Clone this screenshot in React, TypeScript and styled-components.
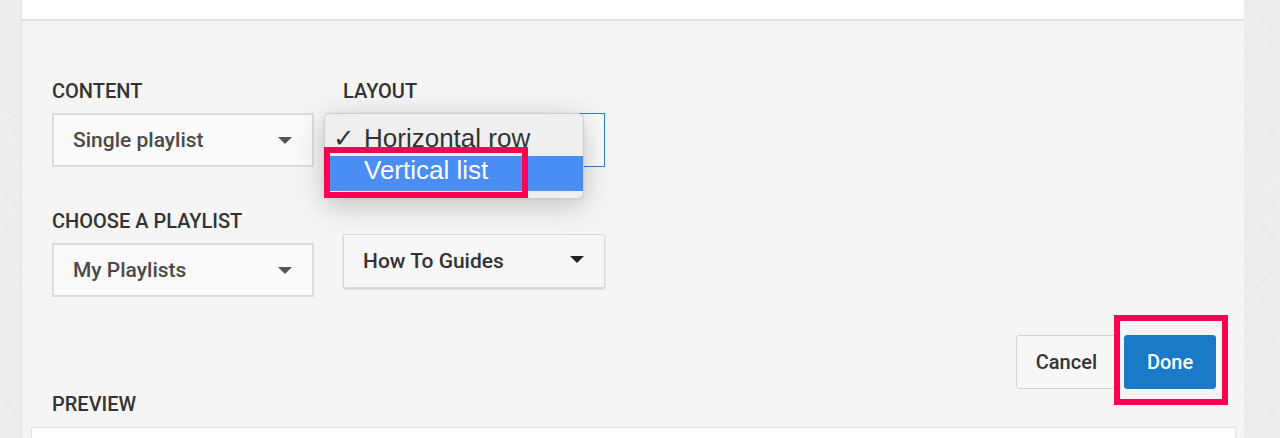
import React from "react";
import styled, { createGlobalStyle } from "styled-components";

const GlobalStyle = createGlobalStyle`
  html, body {
    margin: 0;
    padding: 0;
    background: #ebebeb;
  }
  body {
    font-family: Roboto, "Liberation Sans", Arial, sans-serif;
  }
`;

const Page = styled.div`
  width: 1280px;
  height: 438px;
  overflow: hidden;
  padding-left: 21px;
  box-sizing: border-box;
  background-color: #ececec;
  background-image: repeating-linear-gradient(
      45deg,
      rgba(255, 255, 255, 0.25) 0 1px,
      transparent 1px 3px
    ),
    repeating-linear-gradient(
      -45deg,
      rgba(0, 0, 0, 0.015) 0 1px,
      transparent 1px 3px
    );
`;

const Panel = styled.div`
  width: 1223px;
  height: 100%;
  border-left: 1px solid #e2e2e2;
  box-sizing: border-box;
  display: flex;
  flex-direction: column;
`;

const TopStrip = styled.div`
  height: 19px;
  background: #fff;
  border-bottom: 2px solid #e0e0e0;
  flex-shrink: 0;
`;

const Body = styled.div`
  flex: 1;
  background: #f5f5f5;
  padding: 58px 28px 0 30px;
  display: flex;
  flex-direction: column;
`;

const FieldRow = styled.div<{ $gap?: number }>`
  display: flex;
  gap: 29px;
  align-items: flex-end;
  margin-bottom: ${(p) => p.$gap ?? 0}px;
`;

const Field = styled.div<{ $lift?: number }>`
  width: 262px;
  display: flex;
  flex-direction: column;
  position: relative;
  margin-bottom: ${(p) => p.$lift ?? 0}px;
`;

const Label = styled.div`
  font-size: 20px;
  line-height: 24px;
  font-weight: 500;
  color: #333;
  margin-bottom: 10px;
`;

const Select = styled.div<{ $raised?: boolean; $focused?: boolean }>`
  height: 54px;
  box-sizing: border-box;
  border: ${(p) =>
    p.$focused ? "1px solid #2a7dd6" : p.$raised ? "1px solid #dadada" : "2px solid #dcdcdc"};
  background: ${(p) => (p.$raised ? "#f7f7f7" : "#fafafa")};
  box-shadow: ${(p) => (p.$raised ? "0 1px 2px rgba(0,0,0,0.18)" : "none")};
  border-radius: ${(p) => (p.$raised ? "2px" : "0")};
  display: flex;
  align-items: center;
  justify-content: space-between;
  padding: 0 20px 0 19px;
  font-size: 21px;
  font-weight: 500;
  color: ${(p) => (p.$raised ? "#333" : "#4a4a4a")};
`;

const Caret = styled.span<{ $dark?: boolean; $up?: number }>`
  width: 0;
  height: 0;
  border-left: 7px solid transparent;
  border-right: 7px solid transparent;
  border-top: 7px solid ${(p) => (p.$dark ? "#222" : "#555")};
  margin-top: ${(p) => -(p.$up ?? 0)}px;
`;

const Popup = styled.div`
  position: absolute;
  left: -19px;
  top: 34px;
  width: 260px;
  box-sizing: border-box;
  padding: 10px 0 7px;
  background: #efefef;
  border: 1px solid #cfcfcf;
  border-radius: 6px;
  box-shadow: 0 6px 28px rgba(0, 0, 0, 0.22), 0 0 2px rgba(0, 0, 0, 0.1);
  font-family: "Liberation Sans", Arial, sans-serif;
  font-size: 26px;
  z-index: 5;
`;

const MenuItem = styled.div<{ $active?: boolean }>`
  display: flex;
  align-items: center;
  line-height: 29px;
  padding-left: 8px;
  color: ${(p) => (p.$active ? "#fff" : "#333")};
  background: ${(p) => (p.$active ? "#4a8ef5" : "transparent")};
  margin-bottom: ${(p) => (p.$active ? 0 : 3)}px;
  padding-bottom: ${(p) => (p.$active ? 6 : 0)}px;
  position: relative;
`;

const CheckSlot = styled.span`
  width: 31px;
  flex-shrink: 0;
`;

const Highlight = styled.div<{ $t: number; $r: number; $b: number; $l: number; $w?: number }>`
  position: absolute;
  top: ${(p) => p.$t}px;
  right: ${(p) => p.$r}px;
  bottom: ${(p) => p.$b}px;
  left: ${(p) => p.$l}px;
  border: ${(p) => p.$w ?? 6}px solid #fc0252;
  pointer-events: none;
`;

const Actions = styled.div`
  display: flex;
  justify-content: flex-end;
  gap: 7px;
  margin-top: 38px;
`;

const Button = styled.div<{ $primary?: boolean }>`
  height: 54px;
  box-sizing: border-box;
  display: flex;
  align-items: center;
  justify-content: center;
  padding: 0 ${(p) => (p.$primary ? 0 : 19)}px;
  width: ${(p) => (p.$primary ? "92px" : "auto")};
  font-size: 20px;
  font-weight: 500;
  border-radius: 3px;
  position: relative;
  color: ${(p) => (p.$primary ? "#fff" : "#333")};
  background: ${(p) => (p.$primary ? "#1b7ac8" : "#f8f8f8")};
  border: 1px solid ${(p) => (p.$primary ? "#1b7ac8" : "#d3d3d3")};
`;

const PreviewLabel = styled(Label)`
  margin-top: 3px;
  margin-bottom: 11px;
`;

const PreviewBox = styled.div`
  margin: 0 -20px 0 -21px;
  height: 40px;
  background: #fff;
  border: 1px solid #e2e2e2;
`;

export default function App() {
  return (
    <Page>
      <GlobalStyle />
      <Panel>
        <TopStrip />
        <Body>
          <FieldRow $gap={42}>
            <Field>
              <Label>CONTENT</Label>
              <Select>
                Single playlist
                <Caret />
              </Select>
            </Field>
            <Field>
              <Label>LAYOUT</Label>
              <Select $focused> </Select>
              <Popup>
                <MenuItem>
                  <CheckSlot>✓</CheckSlot>
                  Horizontal row
                </MenuItem>
                <MenuItem $active>
                  <CheckSlot />
                  Vertical list
                  <Highlight $t={-9} $r={55} $b={-7} $l={-1} />
                </MenuItem>
              </Popup>
            </Field>
          </FieldRow>
          <FieldRow>
            <Field>
              <Label>CHOOSE A PLAYLIST</Label>
              <Select>
                My Playlists
                <Caret />
              </Select>
            </Field>
            <Field $lift={9}>
              <Select $raised>
                How To Guides
                <Caret $dark $up={3} />
              </Select>
            </Field>
          </FieldRow>
          <Actions>
            <Button>Cancel</Button>
            <Button $primary>
              Done
              <Highlight $t={-21} $r={-13} $b={-17} $l={-11} />
            </Button>
          </Actions>
          <PreviewLabel>PREVIEW</PreviewLabel>
          <PreviewBox />
        </Body>
      </Panel>
    </Page>
  );
}
